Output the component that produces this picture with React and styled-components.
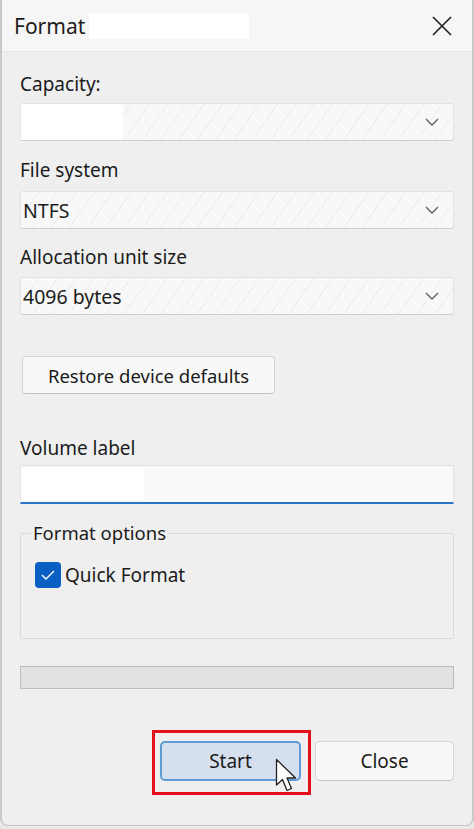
import React from "react";
import styled, { createGlobalStyle } from "styled-components";

const Global = createGlobalStyle`
  html, body {
    margin: 0;
    padding: 0;
    background: #e9e9e9;
  }
  body {
    font-family: "Noto Sans", "Open Sans", sans-serif;
    color: #1b1b1b;
  }
`;

function Chevron() {
  return (
    <svg width="14" height="8" viewBox="0 0 14 8">
      <path d="M1 1 L7 7 L13 1" fill="none" stroke="#5c5c5c" strokeWidth="1.3" />
    </svg>
  );
}

function Combo({ value, redacted }) {
  return (
    <ComboBox>
      {redacted && <Redact width="102px" />}
      <ComboText>{value}</ComboText>
      <Chevron />
    </ComboBox>
  );
}

export default function App() {
  return (
    <>
      <Global />
      <Window>
        <TitleBar>
          <Title>Format</Title>
          <TitleRedact />
          <CloseX>
            <svg width="20" height="20" viewBox="0 0 20 20">
              <path d="M1 1 L19 19 M19 1 L1 19" stroke="#1f1f1f" strokeWidth="1.6" />
            </svg>
          </CloseX>
        </TitleBar>

        <Body>
          <Label $mt="19px">Capacity:</Label>
          <Spacer $h="6px" />
          <Combo redacted />

          <Label $mt="16px">File system</Label>
          <Spacer $h="8px" />
          <Combo value="NTFS" />

          <Label $mt="15px">Allocation unit size</Label>
          <Spacer $h="7px" />
          <Combo value="4096 bytes" />

          <RestoreButton>Restore device defaults</RestoreButton>

          <Label $mt="41px">Volume label</Label>
          <Spacer $h="4px" />
          <TextInput>
            <Redact width="123px" />
          </TextInput>

          <GroupBox>
            <Legend>Format options</Legend>
            <CheckRow>
              <CheckBox>
                <svg width="14" height="10" viewBox="0 0 14 10">
                  <path d="M1 5 L5 9 L13 1" fill="none" stroke="#fff" strokeWidth="1.4" />
                </svg>
              </CheckBox>
              <CheckLabel>Quick Format</CheckLabel>
            </CheckRow>
          </GroupBox>

          <Progress />

          <ButtonRow>
            <StartWrap>
              <DialogButton $primary>Start</DialogButton>
              <Highlight />
              <Cursor>
                <svg width="26" height="38" viewBox="0 0 26 38">
                  <path
                    d="M1.5 1.5 L1.5 27 L7.5 21.5 L12 32.5 L16.5 30.5 L12 20 L20.5 20 Z"
                    fill="#fff"
                    stroke="#222"
                    strokeWidth="1.3"
                    strokeLinejoin="round"
                  />
                </svg>
              </Cursor>
            </StartWrap>
            <DialogButton>Close</DialogButton>
          </ButtonRow>
        </Body>
      </Window>
    </>
  );
}

const Window = styled.div`
  width: 474px;
  height: 826px;
  box-sizing: border-box;
  background: #efefef;
  border-left: 2px solid #c9c9c9;
  border-right: 2px solid #c9c9c9;
  border-bottom: 1px solid #c4c4c4;
  border-radius: 0 0 8px 8px;
  display: flex;
  flex-direction: column;
  overflow: hidden;
`;

const TitleBar = styled.div`
  height: 52px;
  flex-shrink: 0;
  background: #f6f6f6;
  border-bottom: 1px solid #e6e6e6;
  box-sizing: border-box;
  display: flex;
  align-items: center;
  padding-left: 12px;
`;

const Title = styled.div`
  font-size: 21px;
  color: #1c1c1c;
`;

const TitleRedact = styled.div`
  width: 160px;
  height: 26px;
  margin-left: 4px;
  background: #fff;
`;

const CloseX = styled.div`
  margin-left: auto;
  margin-right: 20px;
  display: flex;
  align-items: center;
`;

const Body = styled.div`
  padding: 0 18px;
  display: flex;
  flex-direction: column;
`;

const Label = styled.div`
  margin-top: ${(p) => p.$mt};
  font-size: 19px;
  line-height: 26px;
  color: #1b1b1b;
`;

const Spacer = styled.div`
  height: ${(p) => p.$h};
`;

const ComboBox = styled.div`
  height: 38px;
  box-sizing: border-box;
  display: flex;
  align-items: center;
  padding-right: 14px;
  border: 1px solid #e2e2e2;
  border-bottom-color: #cfcfcf;
  border-radius: 3px;
  background-color: #f8f8f8;
  background-image: repeating-linear-gradient(
    -55deg,
    transparent 0 14px,
    #ededed 14px 15px
  );
`;

const ComboText = styled.span`
  flex: 1;
  padding-left: 2px;
  font-size: 19.5px;
  color: #1b1b1b;
`;

const Redact = styled.div`
  width: ${(p) => p.width};
  align-self: stretch;
  background: #fff;
  flex-shrink: 0;
`;

const RestoreButton = styled.button`
  margin-top: 41px;
  margin-left: 2px;
  align-self: flex-start;
  width: 253px;
  height: 38px;
  font-family: inherit;
  font-size: 18.5px;
  color: #1b1b1b;
  background: #f8f8f8;
  border: 1px solid #d4d4d4;
  border-bottom-color: #c2c2c2;
  border-radius: 4px;
  padding: 0;
`;

const TextInput = styled.div`
  height: 39px;
  box-sizing: border-box;
  display: flex;
  padding: 2px 0;
  background: #f9f9f9;
  border: 1px solid #e2e2e2;
  border-bottom: 2px solid #2b73c8;
  border-radius: 3px 3px 0 0;
`;

const GroupBox = styled.div`
  margin-top: 29px;
  height: 106px;
  box-sizing: border-box;
  border: 1px solid #dadada;
  border-radius: 2px;
  position: relative;
  padding: 28px 0 0 14px;
`;

const Legend = styled.span`
  position: absolute;
  top: -14px;
  left: 10px;
  padding: 0 2px;
  background: #efefef;
  font-size: 18.5px;
  line-height: 26px;
  color: #1b1b1b;
`;

const CheckRow = styled.div`
  display: flex;
  align-items: center;
  gap: 4px;
`;

const CheckBox = styled.div`
  width: 26px;
  height: 26px;
  border-radius: 4px;
  background: #0b5fc3;
  display: flex;
  align-items: center;
  justify-content: center;
`;

const CheckLabel = styled.span`
  font-size: 19px;
  color: #1b1b1b;
`;

const Progress = styled.div`
  margin-top: 27px;
  height: 23px;
  box-sizing: border-box;
  background: #e2e2e2;
  border: 1px solid #bdbdbd;
`;

const ButtonRow = styled.div`
  margin-top: 52px;
  display: flex;
  justify-content: flex-end;
  gap: 14px;
`;

const StartWrap = styled.div`
  position: relative;
  display: flex;
`;

const DialogButton = styled.button`
  width: ${(p) => (p.$primary ? "141px" : "139px")};
  height: 40px;
  padding: 0;
  font-family: inherit;
  font-size: 19px;
  color: #1b1b1b;
  border-radius: 5px;
  background: ${(p) => (p.$primary ? "#d5dfed" : "#f8f8f8")};
  border: ${(p) => (p.$primary ? "2px solid #5d9ad6" : "1px solid #d4d4d4")};
  border-bottom-color: ${(p) => (p.$primary ? "#5d9ad6" : "#c2c2c2")};
`;

const Highlight = styled.span`
  position: absolute;
  left: -8px;
  top: -11px;
  width: 159px;
  height: 65px;
  box-sizing: border-box;
  border: 3px solid #e3101c;
  pointer-events: none;
`;

const Cursor = styled.span`
  position: absolute;
  left: 115px;
  top: 17px;
  line-height: 0;
`;
